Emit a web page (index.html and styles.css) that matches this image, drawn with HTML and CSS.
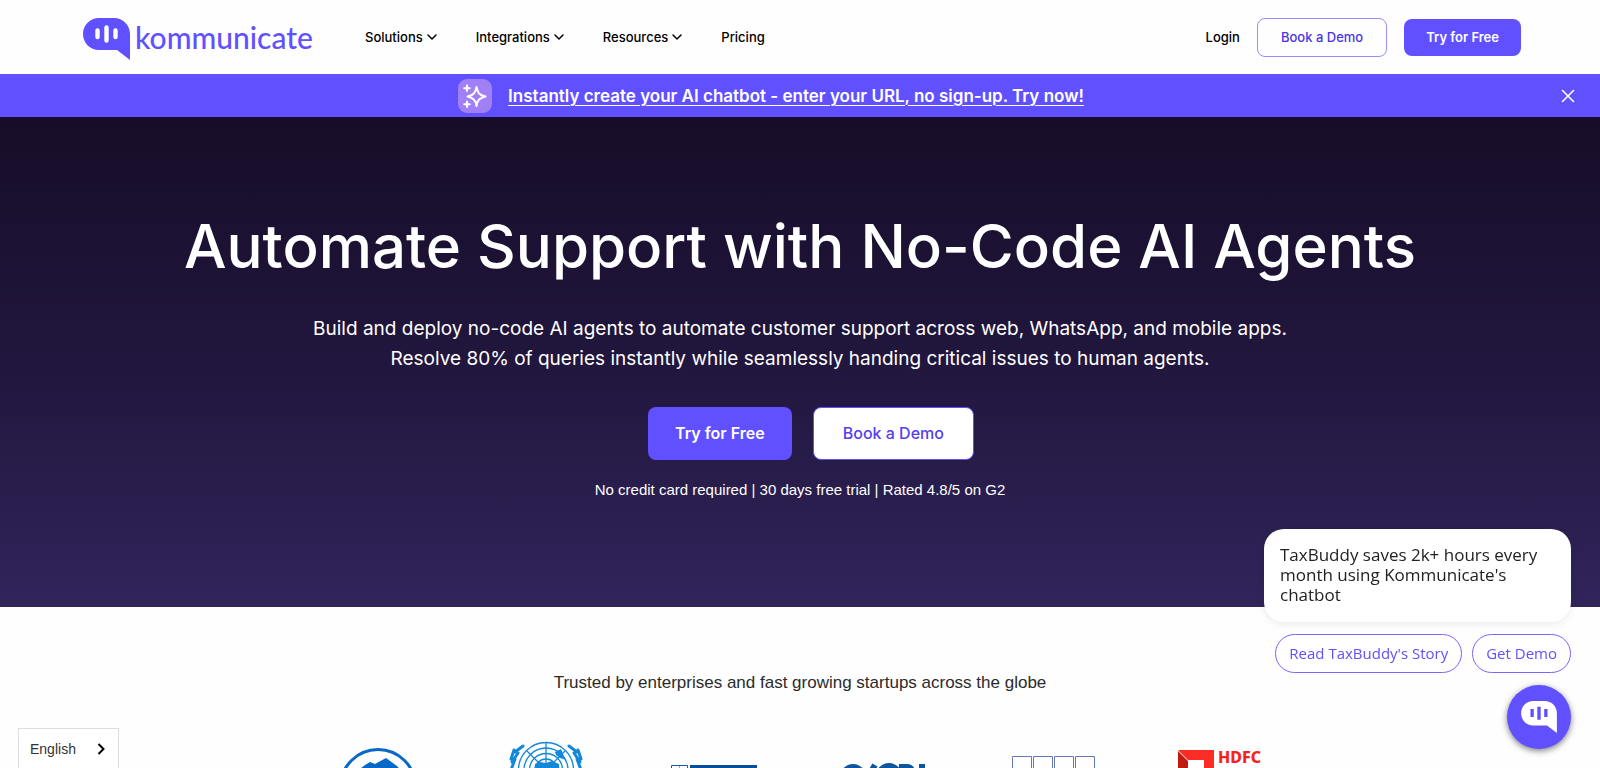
FILE: index.html
```html
<!DOCTYPE html>
<html lang="en">
<head>
<meta charset="utf-8">
<meta name="viewport" content="width=device-width, initial-scale=1">
<title>Kommunicate</title>
<link rel="stylesheet" href="styles.css">
</head>
<body>
<header class="header">
  <a class="brand" href="#">
    <svg class="brand-mark" viewBox="0 0 47 42" aria-hidden="true"><path fill="#6150ff" d="M16 0H31C40 0 47 7 47 16V42L34 32H16C7 32 0 25 0 16S7 0 16 0Z"/><g stroke="#fff" stroke-width="4.4" stroke-linecap="round"><path d="M14.5 12.5V19M23.500 9.500V22.500M32.500 12.500V19"/></g></svg>
    <span class="brand-name">kommunicate</span>
  </a>
  <nav class="nav">
    <button class="nav-link" type="button">Solutions <svg class="chevron" viewBox="0 0 10 6"><path d="M1 1l4 4 4-4"/></svg></button>
    <button class="nav-link" type="button">Integrations <svg class="chevron" viewBox="0 0 10 6"><path d="M1 1l4 4 4-4"/></svg></button>
    <button class="nav-link" type="button">Resources <svg class="chevron" viewBox="0 0 10 6"><path d="M1 1l4 4 4-4"/></svg></button>
    <a class="nav-link" href="#">Pricing</a>
  </nav>
  <div class="actions">
    <a class="nav-link" href="#">Login</a>
    <a class="btn btn-outline" href="#">Book a Demo</a>
    <a class="btn btn-solid" href="#">Try for Free</a>
  </div>
</header>

<div class="banner">
  <span class="spark"><svg viewBox="0 0 34 34" aria-hidden="true"><g fill="none" stroke="#fff" stroke-linecap="round" stroke-linejoin="round" stroke-width="2"><path d="M18.500 8C19.500 14 21.500 16 27.500 17.500C21.500 19 19.500 21 18.500 27C17.500 21 15.500 19 9.500 17.500C15.500 16 17.500 14 18.500 8Z"/><path d="M9 6.500V12M6.200 9.200H11.800M9 22.500V28M6.200 25.200H11.800"/></g></svg></span>
  <a class="banner-link" href="#">Instantly create your AI chatbot - enter your URL, no sign-up. Try now!</a>
  <button class="banner-close" type="button" aria-label="Close"><svg viewBox="0 0 14 14"><path d="M1.500 1.500l11 11M12.500 1.500l-11 11"/></svg></button>
</div>

<main>
  <section class="hero">
    <h1 class="hero-title">Automate Support with No-Code AI Agents</h1>
    <p class="hero-text">Build and deploy no-code AI agents to automate customer support across web, WhatsApp, and mobile apps.<br>Resolve 80% of queries instantly while seamlessly handing critical issues to human agents.</p>
    <div class="hero-actions">
      <a class="btn btn-solid btn-large" href="#">Try for Free</a>
      <a class="btn btn-white btn-large" href="#">Book a Demo</a>
    </div>
    <p class="hero-note">No credit card required | 30 days free trial | Rated 4.8/5 on G2</p>
  </section>

  <section class="trusted">
    <p class="trusted-title">Trusted by enterprises and fast growing startups across the globe</p>
    <div class="logos">
      <svg class="logo" viewBox="0 0 100 80"><circle cx="49" cy="47" r="37.500" fill="none" stroke="#0868c8" stroke-width="3"/><path fill="#0868c8" d="M22 36L36 25 41 22 46 24 57 18 68 26 80 40V60H22Z"/></svg>
      <svg class="logo" viewBox="0 0 100 80"><g fill="none" stroke="#1488d8" stroke-width="1.300"><circle cx="49" cy="30" r="27.500"/><circle cx="49" cy="30" r="22"/><circle cx="49" cy="30" r="16.500"/><circle cx="49" cy="30" r="11"/><path d="M49 3V30M30 11L49 30 68 11M22 30H76"/></g><path fill="#1488d8" d="M38 24l5-2 6 1 6-2 7 3 1 12H37ZM58 12l6-3 2 5 3 6-6-2-4-3Z"/><path fill="none" stroke="#1488d8" stroke-width="3" stroke-linecap="round" d="M26 6l-8 6M21 13l-6 9M18 19l-4 11M17 10l-3 9M72 6l8 6M77 13l6 9M80 19l4 11M81 10l3 9"/></svg>
      <svg class="logo" viewBox="0 0 100 80"><path fill="#fff" stroke="#1958a8" d="M5.500 25.500h16v20h-16z"/><path fill="#084c9e" d="M24 25h67v22H24z"/><path stroke="#8da9ca" d="M13.500 26v18"/></svg>
      <svg class="logo" viewBox="0 0 100 80"><g fill="none" stroke="#0d559e" stroke-width="6"><circle cx="19" cy="37" r="10"/><path d="M31 42L41 25"/><circle cx="55" cy="36" r="10"/><path d="M65 27h8q6 0 6 10M88 24v24"/></g></svg>
      <svg class="logo" viewBox="0 0 100 80"><path fill="none" stroke="#6579ba" d="M9.500 40V16.500h19V40M30.500 40V16.500h19V40M51.500 40V16.500h19V40M72.500 40V16.500h19V40"/></svg>
      <svg class="logo" viewBox="0 0 100 80"><path fill="#fa2c24" d="M7 10H43V46H33V20H17Z"/><path fill="#c01b12" d="M7 11L17 21V46H7Z"/><text class="logo-text" x="47" y="23">HDFC</text></svg>
    </div>
  </section>
</main>

<button class="language" type="button">English <svg viewBox="0 0 8 12"><path d="M1.500 1l5 5-5 5"/></svg></button>

<aside class="chat">
  <p class="chat-message">TaxBuddy saves 2k+ hours every month using Kommunicate's chatbot</p>
  <div class="chat-replies">
    <button class="reply" type="button">Read TaxBuddy's Story</button>
    <button class="reply" type="button">Get Demo</button>
  </div>
  <button class="launcher" type="button" aria-label="Open chat"><svg viewBox="0 0 47 42"><path fill="#fff" d="M16 0H31C40 0 47 7 47 16V42L34 32H16C7 32 0 25 0 16S7 0 16 0Z"/><g stroke="#6150ff" stroke-width="4.400"><path d="M14.500 10.500V21M23.500 7.500V24.500M32.500 10.500V21"/></g></svg></button>
</aside>
</body>
</html>
```
FILE: styles.css
```css
* { box-sizing: border-box; }
body { margin: 0; height: 100vh; overflow: hidden; background: #fefefe; color: #000; font-family: Inter, "Liberation Sans", sans-serif; }
button { margin: 0; padding: 0; border: 0; background: none; font: inherit; color: inherit; cursor: pointer; }
a { color: inherit; text-decoration: none; }
p, h1 { margin: 0; }
svg { display: block; }

.header { display: flex; align-items: center; height: 74px; padding: 0 79px 0 83px; }
.brand { display: flex; align-items: center; gap: 5px; width: 282px; }
.brand-mark { width: 47px; height: 42px; margin-top: 4px; }
.brand-name { color: #6150ff; font: 500 30px/36px Lato, sans-serif; }
.nav { display: flex; gap: 39px; }
.nav-link { display: flex; align-items: center; gap: 4px; font-size: 13px; line-height: 20px; font-weight: 500; }
.chevron { width: 10px; height: 6px; fill: none; stroke: #000; stroke-width: 1.5; stroke-linecap: round; stroke-linejoin: round; }
.actions { display: flex; align-items: center; gap: 17px; margin-left: auto; }
.btn { display: flex; align-items: center; justify-content: center; border-radius: 8px; font-size: 13px; line-height: 19px; }
.btn-outline { padding: 9px 23px; border: 1px solid #9c8cff; color: #4c35e8; font-weight: 500; }
.btn-solid { padding: 9px 22px; background: #6150ff; color: #fff; font-weight: 600; }
.btn-white { border: 1px solid #6150ff; background: #fff; color: #5540ee; font-weight: 500; }
.btn-large { padding: 15px 29px; font-size: 16px; line-height: 21px; }
.btn-solid.btn-large { padding: 15px 27px; }

.banner { position: relative; display: flex; align-items: center; justify-content: center; gap: 16px; height: 43px; padding-right: 58px; background: #6150ff; color: #fff; }
.spark { width: 34px; height: 34px; border-radius: 9px; background: #a080f4; }
.banner-link { font-size: 17px; line-height: 24px; font-weight: 600; text-decoration: underline; text-underline-offset: 3px; text-decoration-thickness: 1px; }
.banner-close { position: absolute; right: 25px; top: 15px; }
.banner-close svg { width: 14px; height: 14px; stroke: #fff; stroke-width: 1.6; stroke-linecap: round; }

.hero { padding: 90px 24px 105px; background: linear-gradient(#170d28, #21163d 50%, #31245b); color: #fff; text-align: center; }
.hero-title { font-size: 60px; line-height: 78px; font-weight: 500; }
.hero-text { margin-top: 29px; font-size: 19px; line-height: 30px; }
.hero-actions { display: flex; justify-content: center; gap: 21px; margin: 33px 0 0 22px; }
.hero-note { margin-top: 18px; font: 15px/24px "Liberation Sans", Arial, sans-serif; }

.trusted { padding-top: 64px; text-align: center; }
.trusted-title { color: #2b2b2b; font: 17px/24px "Liberation Sans", Arial, sans-serif; }
.logos { display: grid; grid-template-columns: repeat(6, 1fr); justify-items: center; width: 1011px; max-width: 100%; margin: 45px auto 0; }
.logo { width: 100px; height: 80px; }
.logo-text { fill: #f5231d; font: 800 16px "Noto Sans", sans-serif; }

.language { position: fixed; left: 18px; bottom: 0; display: flex; align-items: center; gap: 21px; height: 40px; padding: 0 13px 0 11px; border: 1px solid #ddd; border-bottom: 0; background: #fff; color: #333; font: 14px/20px "Liberation Sans", Arial, sans-serif; }
.language svg { width: 8px; height: 12px; fill: none; stroke: #000; stroke-width: 2; }

.chat { position: fixed; right: 29px; bottom: 19px; display: flex; flex-direction: column; align-items: flex-end; gap: 12px; width: 307px; font-family: "Open Sans", sans-serif; }
.chat-message { width: 100%; padding: 16px 12px 17px 16px; border-radius: 20px; background: #fff; box-shadow: 0 2px 8px rgba(0, 0, 0, .08); color: #222; font-size: 17px; line-height: 20px; }
.chat-replies { display: flex; gap: 10px; }
.reply { padding: 8px 13px; border: 1px solid #7766ff; border-radius: 20px; background: #fff; color: #6150ff; font-size: 15px; line-height: 21px; white-space: nowrap; }
.launcher { display: grid; place-items: center; width: 64px; height: 64px; border-radius: 50%; background: #6150ff; box-shadow: 0 2px 6px rgba(0, 0, 0, .5); }
.launcher svg { width: 36px; height: 32px; }
```
